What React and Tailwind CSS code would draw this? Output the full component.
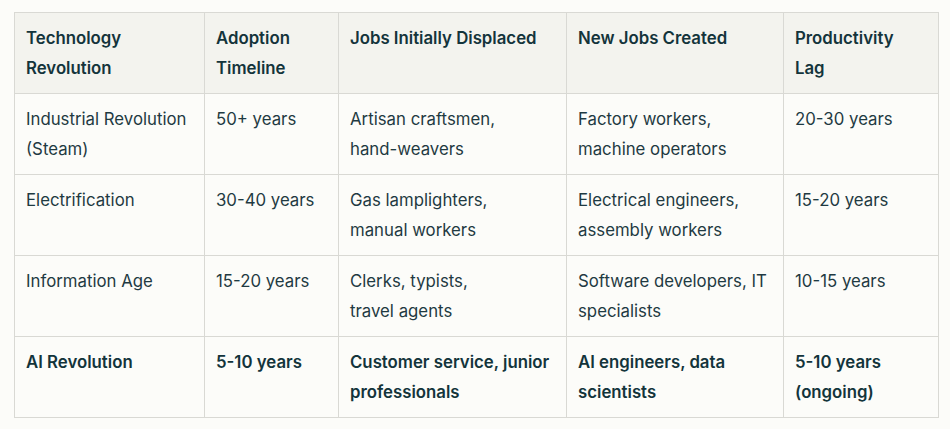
import React from 'react';

// each cell is split into its displayed lines
const head = [
  ['Technology', 'Revolution'],
  ['Adoption', 'Timeline'],
  ['Jobs Initially Displaced'],
  ['New Jobs Created'],
  ['Productivity', 'Lag'],
];

const rows = [
  [['Industrial Revolution', '(Steam)'], ['50+ years'], ['Artisan craftsmen,', 'hand-weavers'], ['Factory workers,', 'machine operators'], ['20-30 years']],
  [['Electrification'], ['30-40 years'], ['Gas lamplighters,', 'manual workers'], ['Electrical engineers,', 'assembly workers'], ['15-20 years']],
  [['Information Age'], ['15-20 years'], ['Clerks, typists,', 'travel agents'], ['Software developers, IT', 'specialists'], ['10-15 years']],
  [['AI Revolution'], ['5-10 years'], ['Customer service, junior', 'professionals'], ['AI engineers, data', 'scientists'], ['5-10 years', '(ongoing)']],
];

const widths = ['w-[190px]', 'w-[134px]', 'w-[228px]', 'w-[217px]', 'w-[155px]'];

function Lines({ lines }) {
  return lines.map((l, i) => (
    <span key={i} className="block whitespace-nowrap">
      {l}
    </span>
  ));
}

export default function App() {
  return (
    <div className="min-h-[429px] w-[950px] bg-[#fcfcf9] pl-[14px] pt-[12px] font-['Inter','Liberation_Sans',sans-serif] text-[16.8px] leading-[30px] text-[#13343b]">
      <table className="table-fixed border-collapse border border-[#d9d9d4] w-[925px]">
        <colgroup>
          {widths.map((w, i) => (
            <col key={i} className={w} />
          ))}
        </colgroup>
        <thead>
          <tr className="bg-[#f3f3ee] h-[81px]">
            {head.map((h, i) => (
              <th key={i} className="border border-[#d9d9d4] px-[11px] pt-[10px] pb-[10px] align-top text-left font-semibold">
                <Lines lines={h} />
              </th>
            ))}
          </tr>
        </thead>
        <tbody>
          {rows.map((r, ri) => {
            const last = ri === rows.length - 1;
            return (
              <tr key={ri} className="h-[81px]">
                {r.map((c, ci) => (
                  <td
                    key={ci}
                    className={`border border-[#d9d9d4] px-[11px] pt-[10px] pb-[10px] align-top ${last ? 'font-semibold' : 'font-normal text-[#1f3a42]'}`}
                  >
                    <Lines lines={c} />
                  </td>
                ))}
              </tr>
            );
          })}
        </tbody>
      </table>
    </div>
  );
}
